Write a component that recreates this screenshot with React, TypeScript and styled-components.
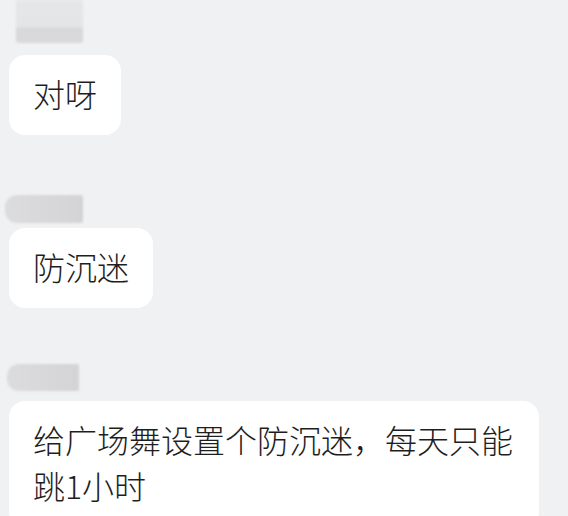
import React from "react";
import styled, { createGlobalStyle } from "styled-components";

type Msg = {
    id: number;
    text: string;
    nameW: number;
    nameH: number;
    nameX: number;
    top: number;
    gap: number;
};

const messages: Msg[] = [
    { id: 1, text: "对呀", nameW: 67, nameH: 43, nameX: 7, top: 0, gap: 12 },
    { id: 2, text: "防沉迷", nameW: 78, nameH: 28, nameX: -4, top: 60, gap: 5 },
    { id: 3, text: "给广场舞设置个防沉迷，每天只能跳1小时", nameW: 72, nameH: 27, nameX: -2, top: 56, gap: 10 },
];

const App = () => {
    return (
        <>
            <GlobalStyle />
            <ChatArea>
                {messages.map((m) => (
                    <MessageGroup key={m.id} $top={m.top}>
                        <NameMask $w={m.nameW} $h={m.nameH} $x={m.nameX} $gap={m.gap} $first={m.id === 1} />
                        <Bubble>{m.text}</Bubble>
                    </MessageGroup>
                ))}
            </ChatArea>
        </>
    );
};

const GlobalStyle = createGlobalStyle`
    html, body {
        margin: 0;
        padding: 0;
        background: #f0f1f3;
        overflow: hidden;
    }
`;

const ChatArea = styled.div`
    width: 568px;
    height: 516px;
    display: flex;
    flex-direction: column;
    align-items: flex-start;
    padding-left: 9px;
    box-sizing: border-box;
    font-family: "Noto Sans CJK SC", "Noto Sans", sans-serif;
    overflow: hidden;
`;

const MessageGroup = styled.div<{ $top: number }>`
    display: flex;
    flex-direction: column;
    align-items: flex-start;
    margin-top: ${(p) => p.$top}px;
`;

// blurred-out sender name above each bubble
const NameMask = styled.div<{ $w: number; $h: number; $x: number; $gap: number; $first: boolean }>`
    width: ${(p) => p.$w}px;
    height: ${(p) => p.$h}px;
    margin-left: ${(p) => p.$x}px;
    margin-bottom: ${(p) => p.$gap}px;
    border-radius: ${(p) => (p.$first ? "0 0 3px 3px" : "12px 2px 2px 12px")};
    background: ${(p) =>
        p.$first
            ? "linear-gradient(180deg, #e6e7e9 0%, #e4e5e7 62%, #d9d9db 66%, #d9d9db 100%)"
            : "linear-gradient(90deg, #dcdcde 0%, #d9d9db 40%, #d4d4d6 100%)"};
    filter: blur(0.8px);
`;

const Bubble = styled.div`
    max-width: 482px;
    padding: 15px 24px 19px;
    font-size: 32px;
    font-weight: 300;
    line-height: 46px;
    color: #1e1e1e;
    background: #ffffff;
    border-radius: 16px;
    word-break: break-all;
`;

export default App;
